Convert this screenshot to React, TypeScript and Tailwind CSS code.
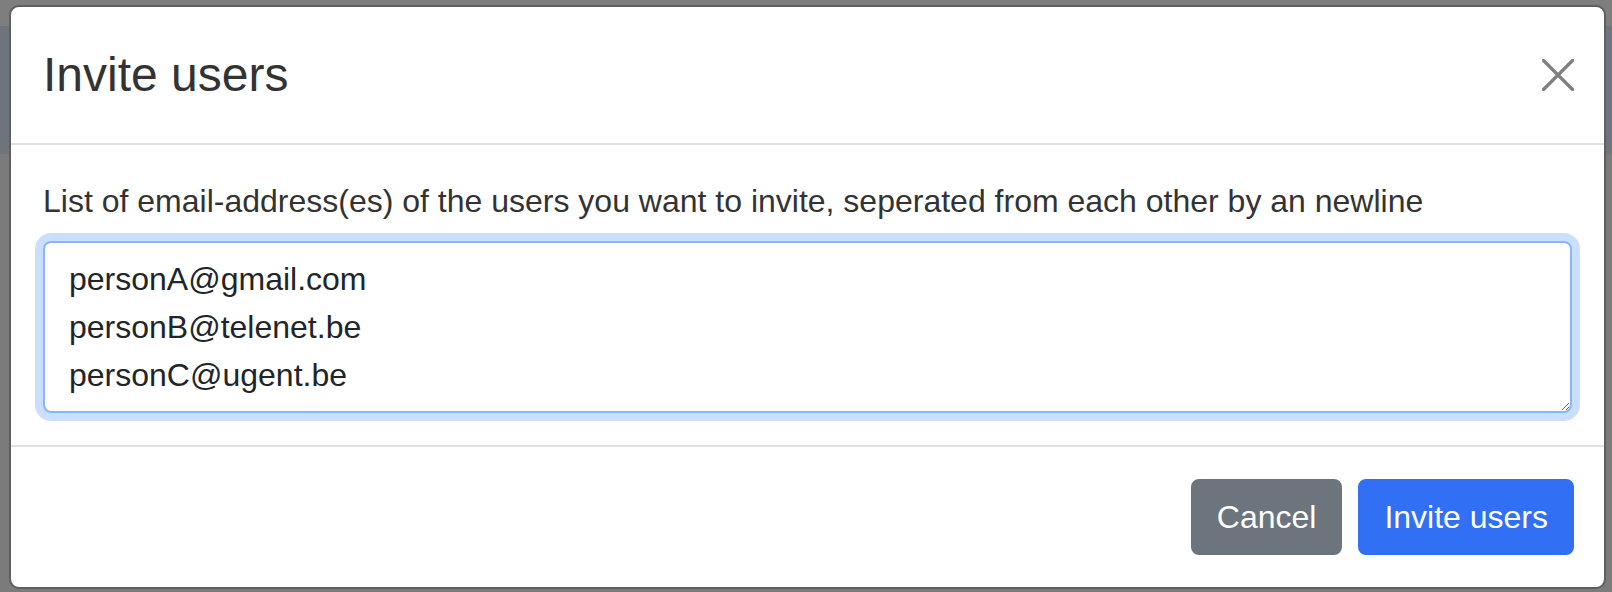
export default function App() {
  return (
    <div className="relative h-[592px] w-[1612px] overflow-hidden bg-[#7b7b7b] font-['Liberation_Sans',Arial,sans-serif]">
      {/* dimmed page behind the modal */}
      <div className="absolute inset-0 flex flex-col">
        <div className="h-[26px] bg-[#7e7e7e]" />
        <div className="h-[128px] bg-[#6e737c]" />
        <div className="flex-1 bg-[#7b7b7b]" />
      </div>

      <div className="relative ml-[9px] mt-[5px] w-[1597px] rounded-[10px] border-2 border-[#5f5f5f] bg-white">
        <div className="flex items-center justify-between border-b-2 border-[#dee2e6] py-8 pl-8 pr-[30px]">
          <h4 className="text-[48px] leading-[72px] font-medium text-[#333]">Invite users</h4>
          <button className="flex h-[32px] w-[32px] items-center justify-center">
            <svg width="32" height="32" viewBox="0 0 32 32">
              <path d="M1.5 1.5L30.5 30.5M30.5 1.5L1.5 30.5" stroke="#7f7f7f" strokeWidth="3.2" strokeLinecap="round" />
            </svg>
          </button>
        </div>

        <div className="p-8">
          <label className="mb-4 block text-[32px] leading-[48px] text-[#333]">
            List of email-address(es) of the users you want to invite, seperated from each other by an newline
          </label>
          <textarea
            rows={3}
            defaultValue={"personA@gmail.com\npersonB@telenet.be\npersonC@ugent.be"}
            className="block h-[172px] w-full rounded-[8px] border-2 border-[#86b7fe] bg-white px-6 py-3 text-[32px] leading-[48px] text-[#212529] shadow-[0_0_0_8px_rgba(13,110,253,0.22)] outline-none"
          />
        </div>

        <div className="flex justify-end gap-4 border-t-2 border-[#dee2e6] py-8 pr-[30px]">
          <button className="rounded-[8px] border-2 border-[#6c757d] bg-[#6c757d] px-6 py-3 text-[32px] leading-[48px] text-white">
            Cancel
          </button>
          <button className="rounded-[8px] border-2 border-[#316ff5] bg-[#316ff5] px-6 py-3 text-[32px] leading-[48px] text-white">
            Invite users
          </button>
        </div>
      </div>
    </div>
  );
}
